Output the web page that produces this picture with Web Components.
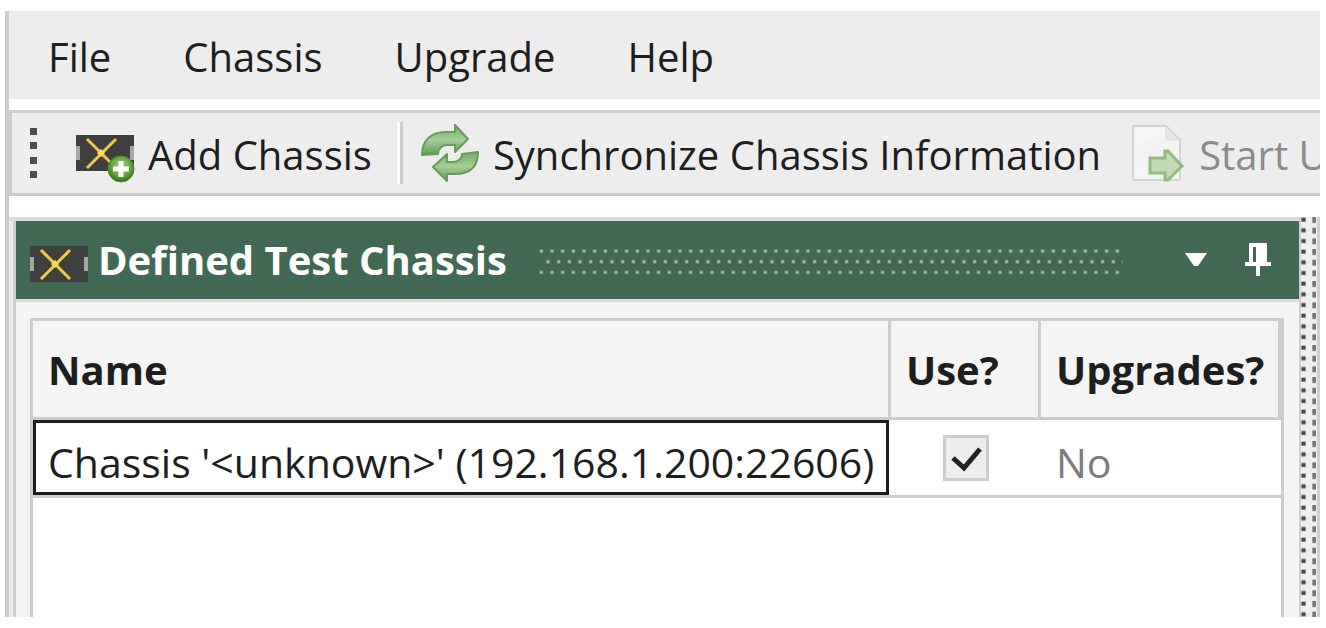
<!DOCTYPE html>
<html lang="en">
<head>
<meta charset="utf-8">
<title>Chassis Upgrade</title>
<style>
  html, body { margin: 0; height: 100%; }
  body { background: #fff; color: #1e1e1e; font: 40px/56px "Open Sans", "Noto Sans", sans-serif; }
</style>
</head>
<body>
<app-window>
  <menu-bar slot="menu">
    <menu-entry>File</menu-entry>
    <menu-entry>Chassis</menu-entry>
    <menu-entry>Upgrade</menu-entry>
    <menu-entry>Help</menu-entry>
  </menu-bar>
  <tool-bar slot="tools">
    <tool-button><chassis-icon slot="icon" add></chassis-icon>Add Chassis</tool-button>
    <tool-separator></tool-separator>
    <tool-button><sync-icon slot="icon"></sync-icon>Synchronize Chassis Information</tool-button>
    <tool-button disabled><start-icon slot="icon"></start-icon>Start U</tool-button>
  </tool-bar>
  <dock-panel>
    <chassis-icon slot="icon"></chassis-icon>
    <span slot="title">Defined Test Chassis</span>
    <chassis-table></chassis-table>
  </dock-panel>
  <dock-splitter></dock-splitter>
</app-window>

<script>
function define(name, html) {
  const template = document.createElement('template');
  template.innerHTML = html;
  customElements.define(name, class extends HTMLElement {
    constructor() {
      super();
      this.attachShadow({ mode: 'open' }).append(template.content.cloneNode(true));
    }
    connectedCallback() {
      const button = this.shadowRoot.querySelector('button');
      if (button && this.hasAttribute('disabled')) button.disabled = true;
    }
  });
}

define('app-window', `
  <style>
    :host { display: flex; box-sizing: border-box; height: 100vh; padding: 11px 6px 11px 5px; overflow: hidden; }
    .frame { flex: 1; min-width: 0; display: flex; flex-direction: column; border-left: 4px solid #cdcdcd; overflow: hidden; }
    .tools { padding: 11px 0 21px; }
    .dock { flex: 1; min-height: 0; display: flex; border-top: 4px solid #dcdcdc; background: #ececec; }
  </style>
  <div class="frame">
    <slot name="menu"></slot>
    <div class="tools"><slot name="tools"></slot></div>
    <main class="dock"><slot></slot></main>
  </div>`);

define('menu-bar', `
  <style>
    :host { display: block; background: #ededed; }
    nav { display: flex; gap: 72px; padding: 18px 39px 14px; }
  </style>
  <nav><slot></slot></nav>`);

define('menu-entry', `
  <style>
    :host { display: block; }
    button { display: block; padding: 0; border: 0; background: none; font: inherit; color: inherit; white-space: nowrap; }
  </style>
  <button type="button"><slot></slot></button>`);

define('tool-bar', `
  <style>
    :host { display: flex; align-items: center; box-sizing: border-box; height: 86px; padding-left: 18px;
            border: 3px solid #cdcdcd; border-right: 0; background: #ededed; overflow: hidden; }
    svg { flex: none; margin-right: 38px; }
  </style>
  <svg width="8" height="51" viewBox="0 0 8 51" fill="#4c4c4c" aria-hidden="true">
    <path d="M0 0h7v7H0zM0 14h7v7H0zM0 29h7v7H0zM0 43h7v7H0z"/>
  </svg>
  <slot></slot>`);

define('tool-button', `
  <style>
    :host { display: block; flex: none; margin-right: 30px; }
    button { display: flex; align-items: center; gap: 14px; padding: 0; border: 0; background: none; font: inherit; color: inherit; white-space: nowrap; }
    span { padding-top: 4px; }
    :host([disabled]) button { color: #8b8b8b; }
  </style>
  <button type="button"><slot name="icon"></slot><span><slot></slot></span></button>`);

define('tool-separator', `
  <style>
    :host { display: block; flex: none; width: 3px; height: 62px; margin: 0 18px 0 -5px; border-left: 3px solid #fff; background: #cdcdcd; }
  </style>`);

define('chassis-icon', `
  <style>
    :host { display: block; flex: none; width: 58px; height: 36px; }
    svg { display: block; overflow: visible; }
    .add { display: none; }
    :host([add]) .add { display: inline; }
  </style>
  <svg width="58" height="36" viewBox="0 0 58 36" aria-hidden="true">
    <defs>
      <radialGradient id="g" cx=".5" cy=".4" r=".6"><stop offset="0" stop-color="#a4cf80"/><stop offset=".6" stop-color="#69a83f"/><stop offset="1" stop-color="#2f6d17"/></radialGradient>
    </defs>
    <path fill="#403f40" d="M0 0h58v36H0z"/>
    <path fill="#a5a4a8" d="M0 11h4v14H0zM54 11h4v14h-4z"/>
    <path stroke="#efc947" stroke-width="3" d="M11 4l29 29M40 4L11 33"/>
    <path fill="#ffd95a" d="M21 18l4-4 4 4-4 4z"/>
    <g class="add">
      <circle cx="45" cy="34" r="13" fill="url(#g)" stroke="#4f8b32" stroke-width="1"/>
      <path stroke="#fff" stroke-width="5" d="M45 26v16M37 34h16"/>
    </g>
  </svg>`);

define('sync-icon', `
  <style>:host { display: block; flex: none; } svg { display: block; }</style>
  <svg width="58" height="58" viewBox="0 0 58 58" aria-hidden="true">
    <defs>
      <linearGradient id="a" x2="0" y2="1"><stop offset="0" stop-color="#72a863"/><stop offset=".5" stop-color="#a5cf98"/><stop offset="1" stop-color="#5c9850"/></linearGradient>
    </defs>
    <g fill="url(#a)" stroke="#659d59" stroke-width="2" stroke-linejoin="round">
      <path d="M1 31C1 16 10 8 25 8h9V1l13 14-13 13v-7h-8c-5 0-9 4-9 9z"/>
      <path d="M57 28c0 15-8 22-23 22h-8v7L12 43l14-13v8h6c5 0 9-3 9-8z"/>
    </g>
  </svg>`);

define('start-icon', `
  <style>:host { display: block; flex: none; } svg { display: block; }</style>
  <svg width="54" height="58" viewBox="0 0 54 58" aria-hidden="true">
    <path fill="#f5f5f5" stroke="#d4d4d4" stroke-width="2" stroke-linejoin="round" d="M4 2h31l14 14v38q0 2-2 2H4q-2 0-2-2V4q0-2 2-2z"/>
    <path fill="#f2f2f2" d="M6 22L30 8v20L6 42z"/>
    <path fill="#e9e9e9" stroke="#dadada" d="M35 3v13h13z"/>
    <path fill="#c2d9b4" stroke="#93bb80" stroke-width="3" d="M19 34h15v-7h3l14 15-14 14h-3v-7H19z"/>
  </svg>`);

define('dock-panel', `
  <style>
    :host { display: flex; flex-direction: column; flex: 1; min-width: 0; margin-left: 4px; border-left: 3px solid #cdcdcd; background: #f4f4f4; }
    header { display: flex; align-items: center; box-sizing: border-box; height: 78px; padding: 0 28px 0 14px; background: #416953; color: #fff; }
    ::slotted(chassis-icon) { margin-top: 8px; }
    h2 { margin: 0 32px 0 10px; font: inherit; font-weight: 700; white-space: nowrap; }
    .grip { flex: 1; min-width: 0; height: 28px; margin: 4px 62px 0 0; }
    button { display: block; padding: 0; border: 0; background: none; }
    button + button { margin-left: 38px; }
    svg { display: block; }
    .body { flex: 1; min-height: 0; display: flex; padding: 16px 15px 0 14px; border-top: 3px solid #dedede; overflow: hidden; }
    ::slotted(chassis-table) { flex: 1; min-width: 0; }
  </style>
  <header>
    <slot name="icon"></slot>
    <h2><slot name="title"></slot></h2>
    <svg class="grip" aria-hidden="true">
      <defs>
        <pattern id="dots" width="32" height="64" patternUnits="userSpaceOnUse" patternTransform="scale(.3333)">
          <path fill="#a3b8ab" d="M2 4h10v10H2zM22 36h10v10H22z"/>
        </pattern>
      </defs>
      <rect width="100%" height="28" fill="url(#dots)"/>
    </svg>
    <button type="button" aria-label="Window position">
      <svg width="22" height="16" viewBox="0 0 22 16"><path fill="#fff" d="M0 1h22L13 14H9z"/></svg>
    </button>
    <button type="button" aria-label="Auto hide">
      <svg width="26" height="34" viewBox="0 0 26 34"><path fill="#fff" fill-rule="evenodd" d="M4 0h18v19h4v4H15v10h-4V23H0v-4h4zM8 4v15h3V4z"/></svg>
    </button>
  </header>
  <div class="body"><slot></slot></div>`);

define('chassis-table', `
  <style>
    :host { display: block; border: 3px solid #cdcdcd; border-bottom: 0; background: #fff; }
    table { width: 100%; border-collapse: separate; border-spacing: 0; table-layout: fixed; }
    .use { width: 150px; }
    .upgrades { width: 240px; }
    th, td { box-sizing: border-box; padding: 2px 8px 0 15px; text-align: left; white-space: nowrap; }
    th { height: 99px; border-right: 3px solid #cdcdcd; border-bottom: 3px solid #cdcdcd; background: #f4f4f4; font-weight: 700; }
    td { height: 78px; padding-top: 8px; border-bottom: 3px solid #cdcdcd; font-size: 41px; }
    td.selected { padding: 0; }
    .focus { box-sizing: border-box; height: 75px; padding: 11px 12px 0; border: 3px solid #1e1e1e; margin-right: 2px; }
    td.check { padding: 0; }
    input { appearance: none; display: block; box-sizing: border-box; width: 46px; height: 46px; margin: 0 auto; border: 3px solid #cdcdcd;
            background: #ededed url("data:image/svg+xml,%3Csvg xmlns='http://www.w3.org/2000/svg' viewBox='0 0 40 40'%3E%3Cpath d='M7 20l11 10L34 11' fill='none' stroke='%23222' stroke-width='5'/%3E%3C/svg%3E") center / 40px 40px no-repeat; }
    .muted { color: #7d7d7d; }
  </style>
  <table>
    <colgroup><col><col class="use"><col class="upgrades"></colgroup>
    <thead><tr><th scope="col">Name</th><th scope="col" id="use">Use?</th><th scope="col">Upgrades?</th></tr></thead>
    <tbody><tr>
      <td class="selected"><div class="focus" tabindex="-1">Chassis '&lt;unknown&gt;' (192.168.1.200:22606)</div></td>
      <td class="check"><input type="checkbox" checked aria-labelledby="use"></td>
      <td class="muted">No</td>
    </tr></tbody>
  </table>`);

define('dock-splitter', `
  <style>
    :host { display: block; flex: none; width: 21px; margin-top: -4px; overflow: hidden; background: #efefef; }
    svg { display: block; width: 100%; height: 100%; }
  </style>
  <svg aria-hidden="true">
    <defs>
      <pattern id="d" width="63" height="32" patternUnits="userSpaceOnUse" patternTransform="scale(.3333)">
        <path fill="#4a4a4a" d="M7 2h13v12H7z"/><path fill="#777" d="M40 0h11v18H40z"/>
      </pattern>
    </defs>
    <path fill="#d0d0d0" d="M0 0h2v999H0zM18 0h3v999h-3z"/>
    <rect width="100%" height="100%" fill="url(#d)"/>
  </svg>`);
</script>
</body>
</html>
